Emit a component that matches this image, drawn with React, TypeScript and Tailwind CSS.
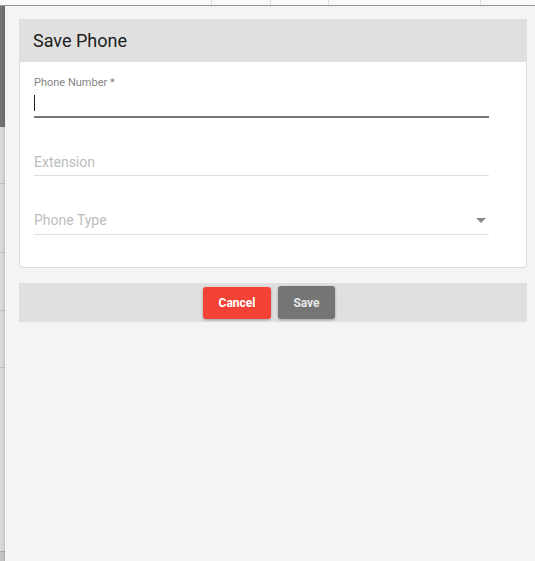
export default function App() {
  return (
    <div className="flex flex-col w-[535px] h-[561px] overflow-hidden bg-[#d6d6d6] font-['Roboto',sans-serif]">
      {/* underlying table header strip */}
      <div className="flex h-[6px] shrink-0 bg-[#fafafa] border-b border-[#9a9a9a]">
        <div className="w-[212px] border-r border-[#dcdcdc]" />
        <div className="w-[59px] border-r border-[#dcdcdc]" />
        <div className="w-[58px] border-r border-[#dcdcdc]" />
        <div className="w-[152px] border-r border-[#dcdcdc]" />
        <div className="flex-1" />
      </div>

      <div className="flex flex-1 min-h-0">
        {/* underlying page, dimmed */}
        <div className="flex flex-col w-[5px] shrink-0">
          <div className="h-[121px] bg-[#727272]" />
          <div className="h-[57px] border-b border-[#bdbdbd] bg-[#d8d8d8]" />
          <div className="h-[69px] border-b border-[#bdbdbd] bg-[#d8d8d8]" />
          <div className="h-[58px] border-b border-[#bdbdbd] bg-[#d8d8d8]" />
          <div className="h-[57px] border-b border-[#bdbdbd] bg-[#d8d8d8]" />
          <div className="h-[184px] border-b border-[#a8a8a8] bg-[#d8d8d8]" />
          <div className="flex-1 bg-[#c4c4c4]" />
        </div>

        {/* sheet */}
        <div className="flex-1 bg-[#f4f4f4] pl-[14px] pr-[8px] pt-[13px] shadow-[-1px_0_2px_rgba(0,0,0,0.12)]">
          <div className="flex items-center h-[43px] px-[14px] bg-[#e0e0e0]">
            <h1 className="text-[18px] text-[#212121]">Save Phone</h1>
          </div>

          <div className="bg-white border border-t-0 border-[#dcdcdc] rounded-b-[4px] pl-[14px] pr-[37px] pt-[14px] pb-[32px]">
            <label className="block text-[11px] leading-[13px] text-[#858585]">Phone Number *</label>
            <div className="flex items-center h-[29px] border-b-2 border-[#757575]">
              <span className="w-px h-[16px] bg-[#212121]" />
            </div>

            <div className="mt-[36px] pb-[5px] border-b border-[#e0e0e0] text-[14px] leading-[16px] text-[#bdbdbd]">
              Extension
            </div>

            <div className="flex items-center justify-between mt-[36px] pb-[6px] border-b border-[#e0e0e0] text-[14px] leading-[16px] text-[#bdbdbd]">
              <span>Phone Type</span>
              <span className="mr-[3px] w-0 h-0 border-l-[5px] border-r-[5px] border-t-[5px] border-l-transparent border-r-transparent border-t-[#8a8a8a]" />
            </div>
          </div>

          <div className="flex items-center justify-center gap-[7px] h-[39px] mt-[15px] pr-[8px] bg-[#e0e0e0]">
            <button className="w-[68px] h-[32px] rounded-[3px] bg-[#f44336] text-white text-[12px] font-bold shadow-[0_1px_3px_rgba(0,0,0,0.3)]">
              Cancel
            </button>
            <button className="w-[57px] h-[33px] rounded-[3px] bg-[#757575] text-[#e8e8e8] text-[12px] font-bold shadow-[0_1px_3px_rgba(0,0,0,0.3)]">
              Save
            </button>
          </div>
        </div>
      </div>
    </div>
  )
}
